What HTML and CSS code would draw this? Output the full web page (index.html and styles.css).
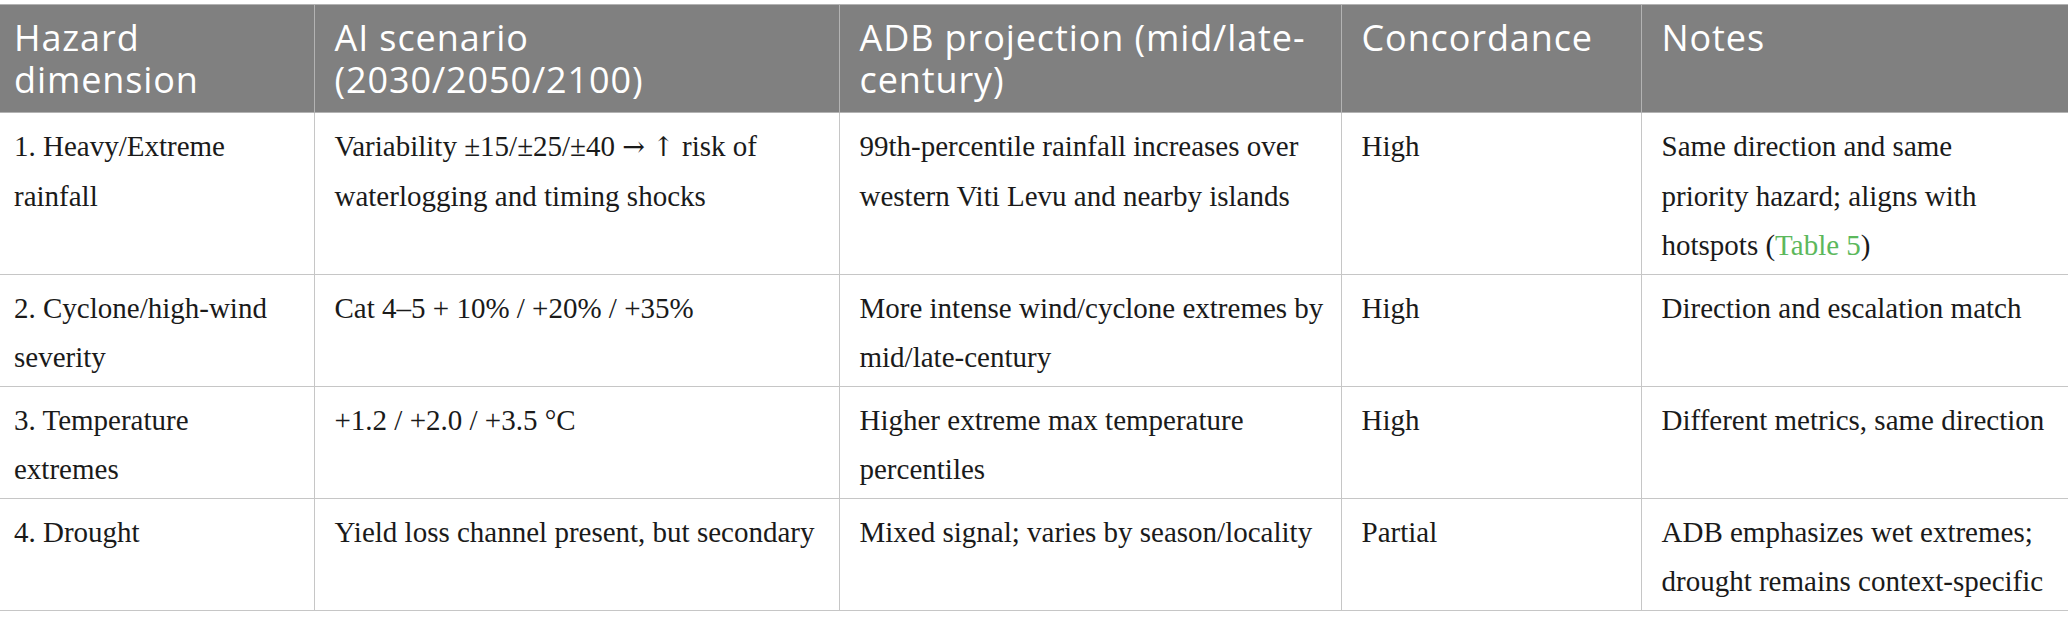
FILE: index.html
```html
<!DOCTYPE html>
<html lang="en">
<head>
<meta charset="utf-8">
<title>Hazard concordance table</title>
<link rel="stylesheet" href="styles.css">
</head>
<body>
<table class="data">
  <colgroup>
    <col class="c1"><col class="c2"><col class="c3"><col class="c4"><col class="c5">
  </colgroup>
  <thead>
    <tr>
      <th>Hazard<br>dimension</th>
      <th>AI scenario<br>(2030/2050/2100)</th>
      <th>ADB projection (mid/late-<br>century)</th>
      <th>Concordance</th>
      <th>Notes</th>
    </tr>
  </thead>
  <tbody>
    <tr>
      <td>1. Heavy/Extreme<br>rainfall</td>
      <td>Variability ±15/±25/±40 <span class="sym">→</span> <span class="sym">↑</span> risk of<br>waterlogging and timing shocks</td>
      <td>99th-percentile rainfall increases over<br>western Viti Levu and nearby islands</td>
      <td>High</td>
      <td>Same direction and same<br>priority hazard; aligns with<br>hotspots (<a class="link" href="#">Table 5</a>)</td>
    </tr>
    <tr>
      <td>2. Cyclone/high-wind<br>severity</td>
      <td>Cat 4–5 + 10% / +20% / +35%</td>
      <td>More intense wind/cyclone extremes by<br>mid/late-century</td>
      <td>High</td>
      <td>Direction and escalation match</td>
    </tr>
    <tr>
      <td>3. Temperature<br>extremes</td>
      <td>+1.2 / +2.0 / +3.5 °C</td>
      <td>Higher extreme max temperature<br>percentiles</td>
      <td>High</td>
      <td>Different metrics, same direction</td>
    </tr>
    <tr>
      <td>4. Drought</td>
      <td>Yield loss channel present, but secondary</td>
      <td>Mixed signal; varies by season/locality</td>
      <td>Partial</td>
      <td>ADB emphasizes wet extremes;<br>drought remains context-specific</td>
    </tr>
  </tbody>
</table>
</body>
</html>
```
FILE: styles.css
```css
html, body {
  margin: 0;
  padding: 0;
  background: #ffffff;
}
body {
  padding-top: 4px;
}
.data {
  width: 2068px;
  table-layout: fixed;
  border-collapse: collapse;
}
.c1 { width: 314px; }
.c2 { width: 525px; }
.c3 { width: 502px; }
.c4 { width: 300px; }
.c5 { width: 427px; }

.data th {
  background: #808080;
  color: #ffffff;
  font-family: "Open Sans", "Noto Sans", sans-serif;
  font-weight: 400;
  font-size: 36px;
  line-height: 42px;
  letter-spacing: 0.9px;
  text-align: left;
  vertical-align: top;
  padding: 12px 8px 11px 20px;
  border: 1px solid #b3b3b3;
  white-space: nowrap;
}
.data td {
  font-family: "Liberation Serif", "Times New Roman", serif;
  font-size: 29px;
  line-height: 49.5px;
  color: #1a1a1a;
  vertical-align: top;
  padding: 9px 6px 3px 20px;
  border: 1px solid #c6c6c6;
  white-space: nowrap;
}
.data th:first-child,
.data td:first-child {
  padding-left: 14px;
  border-left: none;
}
.sym {
  font-family: "DejaVu Serif", serif;
  font-size: 27px;
}
.link {
  color: #5cb85c;
  text-decoration: none;
}
```
